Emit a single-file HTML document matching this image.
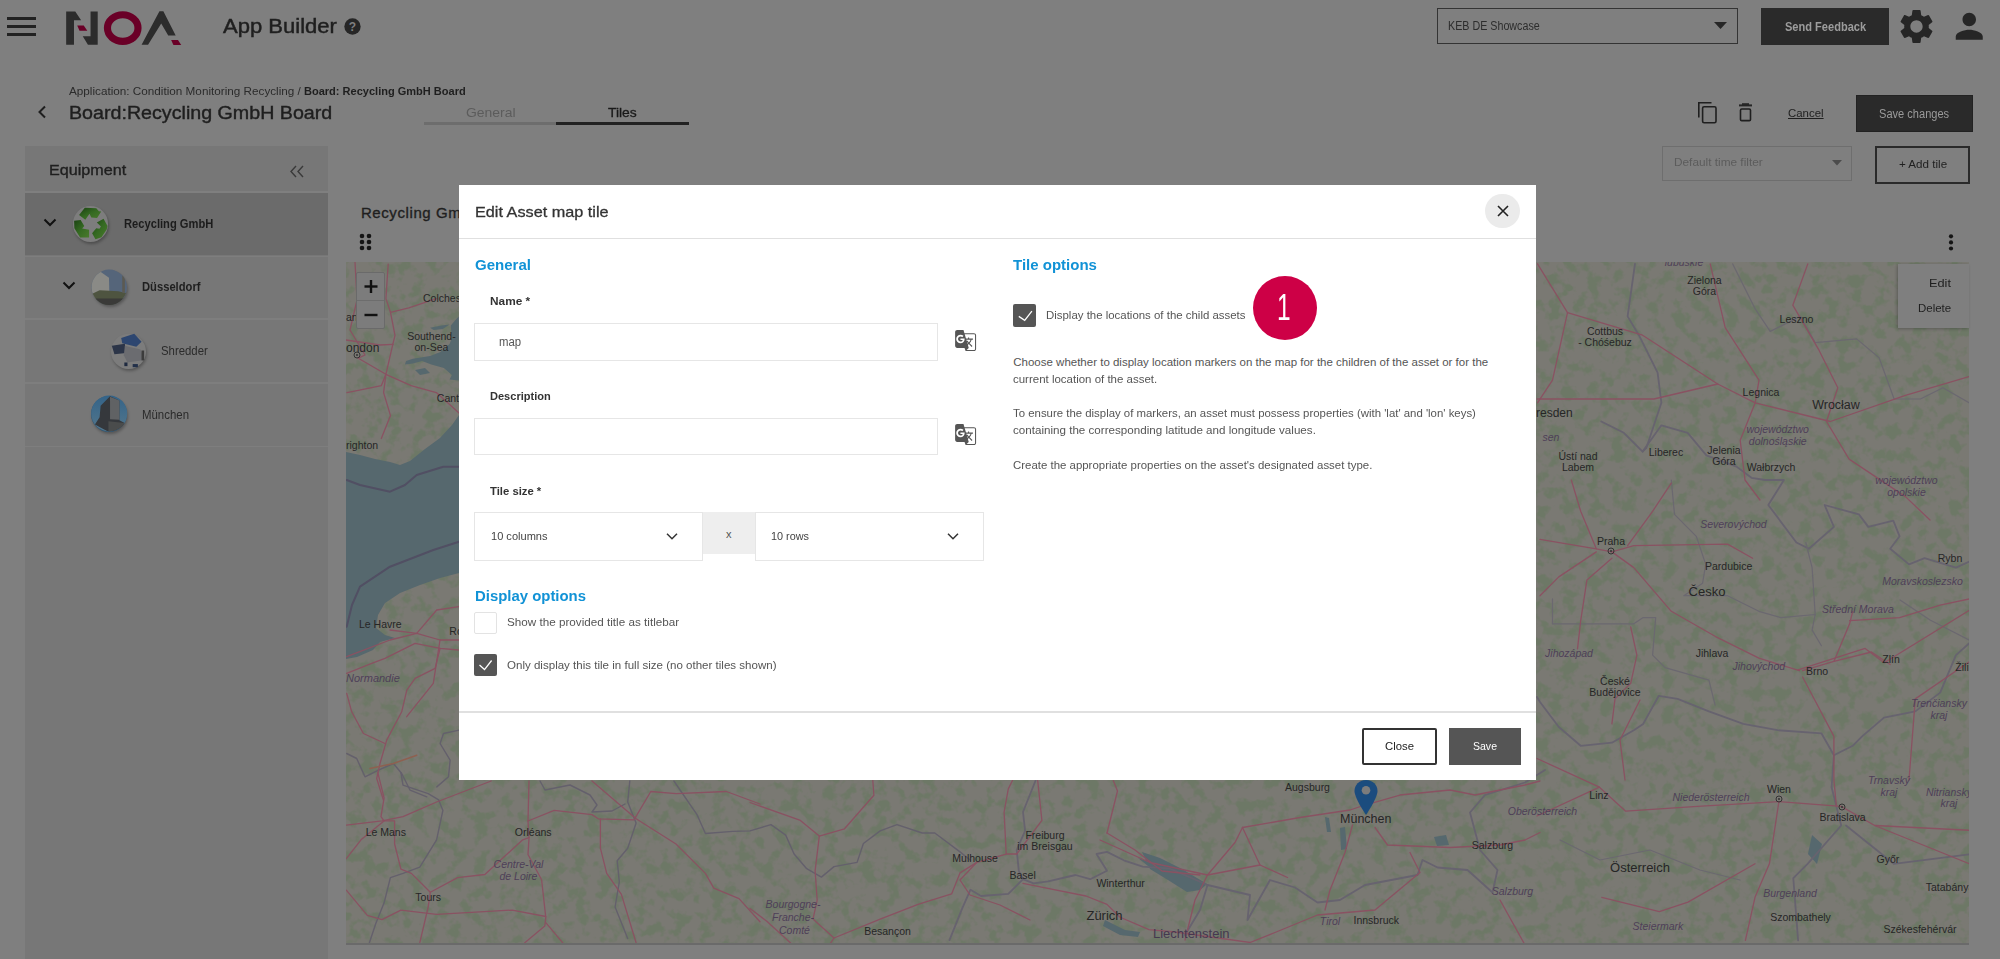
<!DOCTYPE html>
<html><head><meta charset="utf-8">
<style>
html,body{margin:0;padding:0;width:2000px;height:959px;overflow:hidden;background:#7f7f7f;}
body{position:relative;font-family:"Liberation Sans", sans-serif;}
.t{position:absolute;white-space:nowrap;line-height:1;}
.b{position:absolute;box-sizing:border-box;}
svg{position:absolute;overflow:visible;}
</style></head><body>
<!-- header -->
<div class="b" style="left:7px;top:17px;width:29px;height:3px;background:#222;"></div>
<div class="b" style="left:7px;top:24.5px;width:29px;height:3.0px;background:#222;"></div>
<div class="b" style="left:7px;top:32.5px;width:29px;height:3.0px;background:#222;"></div>
<svg style="left:60px;top:5px" width="130" height="45" viewBox="0 0 2000 692">
<polygon fill="#2c2c2c" points="95,100 235,100 325,235 215,235 215,612 95,612"/>
<polygon fill="#6a0027" points="265,315 365,315 420,395 300,395"/>
<polygon fill="#2c2c2c" points="470,100 580,100 580,612 430,612 350,480 470,480"/>
<ellipse cx="965" cy="355" rx="235" ry="205" fill="none" stroke="#6a0027" stroke-width="110"/>
<polygon fill="#2c2c2c" points="1530,95 1590,95 1780,470 1665,470 1557,285 1355,612 1255,612"/>
<polygon fill="#6a0027" points="1710,540 1815,540 1865,615 1745,615"/>
</svg>
<svg style="left:344px;top:18px" width="17" height="17" viewBox="0 0 24 24"><circle cx="12" cy="12" r="11.5" fill="#262626"/><text x="12" y="18" font-size="17" font-weight="700" text-anchor="middle" fill="#7f7f7f" font-family="Liberation Sans">?</text></svg>
<div class="b" style="left:1436.5px;top:7.5px;width:301.5px;height:36.5px;border:1.5px solid #333;"></div>
<svg style="left:1714px;top:22px" width="13" height="7" viewBox="0 0 13 7"><polygon points="0,0 13,0 6.5,7" fill="#262626"/></svg>
<div class="b" style="left:1761.4px;top:7.5px;width:128.0999999999999px;height:37.2px;background:#2a2a2a;"></div>
<svg style="left:1895.5px;top:5.5px" width="41" height="41" viewBox="0 0 24 24"><path fill="#262626" d="M19.14 12.94c.04-.3.06-.61.06-.94 0-.32-.02-.64-.07-.94l2.03-1.58a.49.49 0 0 0 .12-.61l-1.92-3.32a.488.488 0 0 0-.59-.22l-2.39.96c-.5-.38-1.03-.7-1.62-.94l-.36-2.54a.484.484 0 0 0-.48-.41h-3.84c-.24 0-.43.17-.47.41l-.36 2.54c-.59.24-1.13.57-1.62.94l-2.39-.96c-.22-.08-.47 0-.59.22L2.74 8.87c-.12.21-.08.47.12.61l2.03 1.58c-.05.3-.09.63-.09.94s.02.64.07.94l-2.03 1.58a.49.49 0 0 0-.12.61l1.92 3.32c.12.22.37.29.59.22l2.39-.96c.5.38 1.03.7 1.62.94l.36 2.54c.05.24.24.41.48.41h3.84c.24 0 .44-.17.47-.41l.36-2.54c.59-.24 1.13-.56 1.62-.94l2.39.96c.22.08.47 0 .59-.22l1.92-3.32c.12-.22.07-.47-.12-.61l-2.01-1.58zM12 15.6c-1.98 0-3.6-1.62-3.6-3.6s1.62-3.6 3.6-3.6 3.6 1.62 3.6 3.6-1.62 3.6-3.6 3.6z"/></svg>
<svg style="left:1948.75px;top:5.75px" width="40.5" height="40.5" viewBox="0 0 24 24"><path fill="#262626" d="M12 12c2.21 0 4-1.79 4-4s-1.79-4-4-4-4 1.79-4 4 1.79 4 4 4zm0 2c-2.67 0-8 1.34-8 4v2h16v-2c0-2.66-5.33-4-8-4z"/></svg>
<!-- sub header -->
<svg style="left:36px;top:105px" width="12" height="14" viewBox="0 0 12 14"><polyline points="9,1.5 3.5,7 9,12.5" fill="none" stroke="#1f1f1f" stroke-width="2"/></svg>
<div class="b" style="left:424px;top:122px;width:132px;height:3px;background:#6d6d6d;"></div>
<div class="b" style="left:556px;top:122px;width:132.5px;height:3px;background:#222;"></div>
<svg style="left:1696px;top:100px" width="24" height="26" viewBox="0 0 24 26"><path d="M2.8,17.5 V2.8 H15.5" fill="none" stroke="#1f1f1f" stroke-width="1.6"/><rect x="6.6" y="6.8" width="13.4" height="16" rx="1.5" fill="none" stroke="#1f1f1f" stroke-width="1.6"/></svg>
<svg style="left:1736px;top:102px" width="20" height="22" viewBox="0 0 20 22"><rect x="3" y="2.4" width="13" height="2" fill="#262626"/><rect x="6" y="1.2" width="7" height="2" fill="#262626"/><rect x="4.5" y="7" width="10" height="11.6" rx="1.2" fill="none" stroke="#1f1f1f" stroke-width="1.6"/></svg>
<div class="b" style="left:1856px;top:95px;width:116.5px;height:37px;background:#2a2a2a;border:1px solid #222;"></div>
<!-- equipment panel -->
<div class="b" style="left:25px;top:146px;width:303px;height:813px;background:#777;"></div>
<div class="b" style="left:25px;top:191px;width:303px;height:1.5px;background:#7f7f7f;"></div>
<div class="b" style="left:25px;top:192.5px;width:303px;height:62.5px;background:#6b6b6b;"></div>
<div class="b" style="left:25px;top:255.5px;width:303px;height:1.5px;background:#7e7e7e;"></div>
<div class="b" style="left:25px;top:318px;width:303px;height:1.5px;background:#7e7e7e;"></div>
<div class="b" style="left:25px;top:382px;width:303px;height:1.5px;background:#7e7e7e;"></div>
<div class="b" style="left:25px;top:445.5px;width:303px;height:1.5px;background:#7e7e7e;"></div>
<svg style="left:288px;top:164px" width="18" height="15" viewBox="0 0 18 15"><polyline points="8,2 3,7.5 8,13" fill="none" stroke="#3a3a3a" stroke-width="1.4"/><polyline points="15,2 10,7.5 15,13" fill="none" stroke="#3a3a3a" stroke-width="1.4"/></svg>
<svg style="left:43px;top:217px" width="14" height="11" viewBox="0 0 14 11"><polyline points="1.5,2.5 7,8 12.5,2.5" fill="none" stroke="#111" stroke-width="2"/></svg>
<svg style="left:62px;top:280px" width="14" height="11" viewBox="0 0 14 11"><polyline points="1.5,2.5 7,8 12.5,2.5" fill="none" stroke="#111" stroke-width="2"/></svg>
<!-- asset icons -->
<div class="b" style="left:72.8px;top:206.3px;width:35.4px;height:35.4px;border-radius:50%;background:#7d7d7d;box-shadow:1px 2px 3px rgba(0,0,0,.28);"></div>
<svg style="left:65px;top:200px" width="70" height="50" viewBox="0 0 1343 959">
<defs><linearGradient id="rg" x1="0" y1="0" x2="1" y2="1"><stop offset="0" stop-color="#1a4212"/><stop offset="0.5" stop-color="#356a22"/><stop offset="1" stop-color="#4a7a2c"/></linearGradient></defs>
<g fill="url(#rg)">
<polygon points="270,290 380,150 600,160 650,215 695,220 615,345 505,335 470,265 390,380"/>
<polygon points="610,430 740,360 815,500 800,565 700,715 585,755 520,640 600,540 660,550 690,510"/>
<polygon points="175,400 300,385 370,500 330,548 462,570 462,720 290,720 180,540"/>
</g></svg>
<div class="b" style="left:91.5px;top:269.6px;width:35.4px;height:35.4px;border-radius:50%;background:#6a6a6a;box-shadow:1px 2px 3px rgba(0,0,0,.28);"></div>
<svg style="left:85px;top:262px" width="70" height="50" viewBox="0 0 1343 959">
<defs><clipPath id="cd"><circle cx="465" cy="485" r="340"/></clipPath></defs>
<g clip-path="url(#cd)">
<rect x="0" y="0" width="1343" height="959" fill="#55657a"/>
<polygon points="120,250 290,180 460,300 470,720 120,720" fill="#8a8a86"/>
<polygon points="280,540 640,560 800,600 800,900 120,900 120,620" fill="#4e5440"/>
<rect x="120" y="700" width="700" height="200" fill="#3a3a38"/>
<rect x="715" y="260" width="50" height="330" fill="#5c5a52"/>
</g></svg>
<div class="b" style="left:110.5px;top:333.6px;width:35.4px;height:35.4px;border-radius:50%;background:#7c7c7c;box-shadow:1px 2px 3px rgba(0,0,0,.28);"></div>
<svg style="left:104px;top:326px" width="50" height="50" viewBox="0 0 959 959">
<polygon points="330,230 580,150 720,300 620,400 350,330" fill="#2d4670"/>
<polygon points="150,380 400,340 420,520 200,540" fill="#2c3548"/>
<polygon points="400,380 700,450 770,650 450,700 380,560" fill="#6b6c70"/>
<rect x="720" y="470" width="50" height="190" fill="#3c3c3c"/>
<rect x="390" y="700" width="60" height="70" fill="#1f2a40"/>
<rect x="550" y="730" width="100" height="60" fill="#22304a"/>
</svg>
<div class="b" style="left:91.2px;top:395.5px;width:36px;height:36px;border-radius:50%;background:#2f5877;box-shadow:1px 2px 3px rgba(0,0,0,.28);"></div>
<svg style="left:85px;top:389px" width="50" height="50" viewBox="0 0 959 959">
<defs><clipPath id="cm"><circle cx="465" cy="470" r="345"/></clipPath><linearGradient id="sky" x1="0" y1="0" x2="0" y2="1"><stop offset="0" stop-color="#2e6088"/><stop offset="1" stop-color="#5a7a8c"/></linearGradient></defs>
<g clip-path="url(#cm)">
<rect x="0" y="0" width="959" height="959" fill="url(#sky)"/>
<polygon points="300,320 480,140 660,220 660,600 760,650 700,800 450,820 190,680 280,540" fill="#35383c"/>
<polygon points="480,150 660,220 660,590 480,580" fill="#606264"/>
<polygon points="450,620 760,650 700,800 450,820" fill="#4a4c4c"/>
</g></svg>
<!-- tile toolbar -->
<div class="b" style="left:1662.4px;top:146.4px;width:189.39999999999986px;height:34.19999999999999px;border:1px solid #6e6e6e;"></div>
<svg style="left:1831px;top:160px" width="12" height="6" viewBox="0 0 12 6"><polygon points="1,0 11,0 6,5.5" fill="#4c4c4c"/></svg>
<div class="b" style="left:1875.3px;top:146.4px;width:95.20000000000005px;height:37.400000000000006px;border:2px solid #2a2a2a;"></div>
<svg style="left:358px;top:232px" width="16" height="20" viewBox="0 0 16 20"><g fill="#151515"><circle cx="4" cy="4" r="2.3"/><circle cx="11" cy="4" r="2.3"/><circle cx="4" cy="10" r="2.3"/><circle cx="11" cy="10" r="2.3"/><circle cx="4" cy="16" r="2.3"/><circle cx="11" cy="16" r="2.3"/></g></svg>
<svg style="left:1946px;top:232px" width="10" height="20" viewBox="0 0 10 20"><g fill="#151515"><circle cx="5" cy="4.3" r="2.1"/><circle cx="5" cy="10.4" r="2.1"/><circle cx="5" cy="16.5" r="2.1"/></g></svg>
<div class="t" id="appb" style="left:223.00px;top:16.37px;font-size:20px;color:#1f1f1f;transform:scaleX(1.1020);transform-origin:0 0;-webkit-text-stroke:0.45px #1f1f1f;">App Builder</div>
<div class="t" id="keb" style="left:1447.60px;top:20.44px;font-size:12px;color:#2d2d2d;transform:scaleX(0.8930);transform-origin:0 0;">KEB DE Showcase</div>
<div class="t" id="sendfb" style="left:1784.90px;top:20.84px;font-size:12px;color:#9c9c9c;font-weight:700;transform:scaleX(0.9210);transform-origin:0 0;">Send Feedback</div>
<div class="t" id="bc1" style="left:68.70px;top:86.21px;font-size:10.5px;color:#2b2b2b;transform:scaleX(1.1160);transform-origin:0 0;">Application: Condition Monitoring Recycling /</div>
<div class="t" id="bc2" style="left:303.50px;top:86.21px;font-size:10.5px;color:#1f1f1f;font-weight:700;transform:scaleX(1.0500);transform-origin:0 0;">Board: Recycling GmbH Board</div>
<div class="t" id="title" style="left:69.10px;top:104.26px;font-size:18px;color:#1f1f1f;transform:scaleX(1.0920);transform-origin:0 0;-webkit-text-stroke:0.4px #1f1f1f;">Board:Recycling GmbH Board</div>
<div class="t" id="tabgen" style="left:465.50px;top:105.70px;font-size:13px;color:#5c5c5c;transform:scaleX(1.0700);transform-origin:0 0;">General</div>
<div class="t" id="tabtiles" style="left:608.30px;top:105.70px;font-size:13px;color:#1a1a1a;transform:scaleX(1.0640);transform-origin:0 0;-webkit-text-stroke:0.3px #1a1a1a;">Tiles</div>
<div class="t" id="cancel" style="left:1788.30px;top:107.77px;font-size:11.5px;color:#1f1f1f;transform:scaleX(0.9940);transform-origin:0 0;text-decoration:underline;">Cancel</div>
<div class="t" id="savech" style="left:1879.25px;top:107.84px;font-size:12px;color:#9a9a9a;transform:scaleX(0.9220);transform-origin:0 0;">Save changes</div>
<div class="t" id="equip" style="left:48.80px;top:162.30px;font-size:15px;color:#1f1f1f;transform:scaleX(1.0760);transform-origin:0 0;-webkit-text-stroke:0.35px #1f1f1f;">Equipment</div>
<div class="t" id="rec" style="left:123.50px;top:218.02px;font-size:12.5px;color:#1c1c1c;font-weight:700;transform:scaleX(0.8930);transform-origin:0 0;">Recycling GmbH</div>
<div class="t" id="dus" style="left:142.30px;top:280.72px;font-size:12.5px;color:#1f1f1f;font-weight:700;transform:scaleX(0.8960);transform-origin:0 0;">Düsseldorf</div>
<div class="t" id="shr" style="left:161.30px;top:344.92px;font-size:12.5px;color:#2b2b2b;transform:scaleX(0.9100);transform-origin:0 0;">Shredder</div>
<div class="t" id="mun" style="left:142.30px;top:408.72px;font-size:12.5px;color:#2b2b2b;transform:scaleX(0.9140);transform-origin:0 0;">München</div>
<div class="t" id="tiletitle" style="left:360.90px;top:204.90px;font-size:15px;color:#1f1f1f;-webkit-text-stroke:0.35px #1f1f1f;letter-spacing:0.6px;">Recycling GmbH Board</div>
<div class="t" id="dtf" style="left:1673.50px;top:157.27px;font-size:11.5px;color:#5c5c5c;transform:scaleX(1.0280);transform-origin:0 0;">Default time filter</div>
<div class="t" id="addtile" style="left:1898.60px;top:159.27px;font-size:11.5px;color:#1f1f1f;transform:scaleX(1.0100);transform-origin:0 0;">+ Add tile</div>
<!-- map -->
<div class="b" style="left:346px;top:262px;width:1623px;height:681px;overflow:hidden;background:#777570;">
<svg style="left:0;top:0" width="1623" height="681" viewBox="346 262 1623 681" font-family="Liberation Sans, sans-serif"><defs><filter id="fo" x="0" y="0" width="100%" height="100%" color-interpolation-filters="sRGB"><feTurbulence type="fractalNoise" baseFrequency="0.08" numOctaves="3" seed="7"/><feColorMatrix type="matrix" values="0 0 0 0 0.40  0 0 0 0 0.47  0 0 0 0 0.37  6 0 0 0 -2.9"/></filter></defs>
<rect x="346" y="262" width="1623" height="681" fill="#7a7973"/>
<rect x="346" y="262" width="1623" height="681" filter="url(#fo)" opacity="0.6"/>
<polygon points="346.0,452.0 360.0,455.0 375.0,459.0 390.0,462.0 400.0,465.0 410.0,461.0 425.0,449.0 440.0,438.0 452.0,425.0 459.0,415.0 459.0,573.0 440.0,578.0 420.0,585.0 400.0,593.0 385.0,603.0 378.0,615.0 376.0,628.0 385.0,635.0 395.0,638.0 380.0,642.0 373.0,650.0 357.0,657.0 346.0,659.0" fill="#56686e" />
<polygon points="458.8,316.4 456.5,318.7 450.8,325.6 451.9,338.2 449.6,343.9 440.5,351.9 430.1,355.9 412.9,358.8 406.1,361.1 404.9,364.5 412.9,363.4 422.1,361.1 431.3,364.5 443.9,367.9 451.9,374.9 449.6,379.4 458.8,380.6" fill="#56686e" />
<polygon points="430.1,327.8 441.6,325.6 449.6,324.4 442.8,329.0 433.6,330.1" fill="#56686e" />
<polygon points="415.0,370.0 425.0,368.0 430.0,373.0 420.0,375.0" fill="#56686e" />
<polygon points="1142.0,852.0 1160.0,858.0 1182.0,869.0 1207.0,884.0 1200.0,890.0 1187.0,892.0 1168.0,880.0 1150.0,869.0" fill="#56686e" />
<polygon points="1138.0,858.0 1150.0,862.0 1170.0,867.0 1170.0,872.0 1148.0,866.0" fill="#56686e" />
<polygon points="1325.0,817.0 1329.0,818.0 1331.0,832.0 1327.0,832.0" fill="#56686e" />
<polygon points="1340.0,828.0 1345.0,827.0 1347.0,849.0 1341.0,850.0" fill="#56686e" />
<polygon points="1434.0,837.0 1446.0,835.0 1449.0,845.0 1437.0,846.0" fill="#56686e" />
<polygon points="1812.0,835.0 1822.0,844.0 1817.0,864.0 1808.0,854.0" fill="#56686e" />
<polygon points="1105.0,920.0 1125.0,930.0 1140.0,932.0 1138.0,937.0 1120.0,935.0 1103.0,926.0" fill="#56686e" />
<polyline points="346.7,480.0 360.0,485.0 390.0,491.7 405.0,485.0 416.7,475.0 443.3,466.7 459.0,466.7" fill="none" stroke="#514f63" stroke-width="2" stroke-linejoin="round" stroke-linecap="round" />
<polyline points="346.7,626.7 352.0,605.0 360.0,586.7 390.0,566.7 433.3,550.0 459.0,541.7" fill="none" stroke="#514f63" stroke-width="2" stroke-linejoin="round" stroke-linecap="round" />
<polyline points="400.9,772.6 403.0,785.2 428.2,793.6 438.7,799.9 442.9,810.4 436.6,839.8 419.8,867.1 403.0,873.4 390.4,877.6 384.1,902.8 375.7,923.8 369.4,942.7" fill="none" stroke="#64606c" stroke-width="1.4" stroke-linejoin="round" stroke-linecap="round" />
<polyline points="629.8,781.0 627.7,802.0 636.1,823.0 627.7,848.2 617.2,860.8 619.3,881.8 615.1,907.0 627.7,938.5" fill="none" stroke="#64606c" stroke-width="1.4" stroke-linejoin="round" stroke-linecap="round" />
<polyline points="673.9,781.0 697.0,814.6 705.4,833.5 732.7,831.4 750.0,830.9 771.0,824.6 785.7,835.1 794.1,854.0 806.7,868.7 821.4,877.1 834.0,866.6 857.1,862.4 863.4,843.5 880.2,830.9 897.0,824.6 922.2,833.0 934.8,833.0 960.0,851.9 970.5,860.3" fill="none" stroke="#64606c" stroke-width="1.4" stroke-linejoin="round" stroke-linecap="round" />
<polyline points="346.7,753.5 356.7,758.5 365.0,776.8 378.4,770.2 393.4,763.5 401.7,773.5 410.1,790.2 426.8,796.9" fill="none" stroke="#64606c" stroke-width="1.4" stroke-linejoin="round" stroke-linecap="round" />
<polyline points="459.0,730.1 443.5,733.5 440.1,743.5 450.1,760.2 448.5,776.8 436.8,786.9" fill="none" stroke="#64606c" stroke-width="1.4" stroke-linejoin="round" stroke-linecap="round" />
<polyline points="540.0,781.0 545.0,790.0 570.0,785.0 590.0,795.0 597.0,805.0 592.0,812.0 612.0,811.0 625.0,804.0" fill="none" stroke="#64606c" stroke-width="1.4" stroke-linejoin="round" stroke-linecap="round" />
<polyline points="1035.6,780.5 1023.0,812.0 1025.1,830.9 1016.7,849.8 1018.8,870.8 1023.0,879.2" fill="none" stroke="#67636f" stroke-width="1.8" stroke-linejoin="round" stroke-linecap="round" />
<polyline points="1023.0,879.2 1033.5,883.4 1048.2,881.3 1075.5,875.0 1090.2,879.2 1107.0,870.8 1096.5,854.0 1107.0,851.9 1123.8,860.3 1142.7,866.6 1170.0,868.7 1207.5,885.0" fill="none" stroke="#67636f" stroke-width="1.8" stroke-linejoin="round" stroke-linecap="round" />
<polyline points="1023.0,879.2 1008.3,893.9 981.0,896.0 970.5,889.7 962.1,908.6 949.5,940.1" fill="none" stroke="#67636f" stroke-width="1.8" stroke-linejoin="round" stroke-linecap="round" />
<polyline points="1207.5,885.0 1250.0,895.0 1247.5,920.0 1270.0,880.0 1295.0,887.5 1317.5,902.5 1340.0,900.0 1365.0,885.0 1417.5,875.0 1422.5,860.0 1437.5,867.5 1467.5,870.0 1492.5,892.5 1497.5,870.0 1480.0,850.0 1470.0,812.5 1485.0,795.0 1525.0,782.5 1545.0,770.0" fill="none" stroke="#67636f" stroke-width="1.8" stroke-linejoin="round" stroke-linecap="round" />
<polyline points="1207.5,885.0 1200.0,910.0 1185.0,935.0" fill="none" stroke="#67636f" stroke-width="1.8" stroke-linejoin="round" stroke-linecap="round" />
<polyline points="1635.0,263.9 1627.6,316.4 1638.9,335.2 1657.6,372.7 1661.4,402.8 1646.4,447.8 1642.6,451.6" fill="none" stroke="#67636f" stroke-width="1.8" stroke-linejoin="round" stroke-linecap="round" />
<polyline points="1601.3,421.5 1623.8,432.8 1642.6,451.6 1661.4,425.3 1687.7,432.8 1706.4,455.3 1736.5,466.6 1751.5,477.8 1765.1,480.0 1783.9,480.0 1768.3,505.0 1796.4,542.5 1808.9,548.8 1833.9,526.9 1824.6,505.0 1858.9,514.4 1868.3,526.9 1893.3,520.7 1899.6,536.3 1890.2,548.8 1909.0,564.4 1924.6,558.2 1955.9,567.6 1970.0,561.3" fill="none" stroke="#67636f" stroke-width="1.8" stroke-linejoin="round" stroke-linecap="round" />
<polyline points="1537.0,697.0 1540.0,702.0 1558.8,727.0 1580.7,745.8 1611.9,742.7 1633.8,730.2 1643.2,723.9 1658.8,695.8 1677.6,698.9 1708.9,711.4 1743.3,723.9 1777.6,730.2 1821.4,733.3 1833.9,755.2 1852.7,745.8 1862.1,736.4 1884.0,717.6 1915.3,711.4 1940.2,692.6 1955.9,655.1 1970.0,642.6" fill="none" stroke="#67636f" stroke-width="1.8" stroke-linejoin="round" stroke-linecap="round" />
<polyline points="1833.9,755.2 1831.6,787.2" fill="none" stroke="#67636f" stroke-width="1.8" stroke-linejoin="round" stroke-linecap="round" />
<polyline points="1831.6,787.2 1841.2,825.5 1807.6,863.8 1793.3,878.2 1798.1,940.4" fill="none" stroke="#67636f" stroke-width="1.8" stroke-linejoin="round" stroke-linecap="round" />
<polyline points="1846.0,825.5 1893.8,863.8 1969.5,854.3" fill="none" stroke="#67636f" stroke-width="1.8" stroke-linejoin="round" stroke-linecap="round" />
<polyline points="1732.7,263.9 1755.2,308.9 1770.2,331.4 1800.3,316.4 1815.3,342.7 1856.6,338.9 1879.1,357.7 1894.1,399.0 1920.4,399.0 1942.9,387.7 1969.0,402.8" fill="none" stroke="#6b6870" stroke-width="1.2" stroke-linejoin="round" stroke-linecap="round" />
<polyline points="1671.3,480.0 1674.5,514.4 1696.3,536.3 1705.7,564.4 1702.6,583.2 1683.8,595.7 1727.6,595.7 1758.9,611.3 1780.8,617.6 1815.2,614.5 1812.1,630.1 1821.4,645.7" fill="none" stroke="#6b6870" stroke-width="1.2" stroke-linejoin="round" stroke-linecap="round" />
<polyline points="1815.2,614.5 1812.1,567.6 1805.8,542.5" fill="none" stroke="#6b6870" stroke-width="1.2" stroke-linejoin="round" stroke-linecap="round" />
<polyline points="1552.5,598.8 1552.5,623.8 1580.7,623.8 1633.8,623.8 1643.2,617.6 1655.7,617.6 1652.6,655.1 1665.1,667.6 1708.9,680.1 1715.1,705.1" fill="none" stroke="#6b6870" stroke-width="1.2" stroke-linejoin="round" stroke-linecap="round" />
<polyline points="1560.0,840.0 1600.0,860.0 1650.0,850.0 1700.0,870.0 1740.0,880.0" fill="none" stroke="#6b6870" stroke-width="1.2" stroke-linejoin="round" stroke-linecap="round" />
<polyline points="1900.0,600.0 1930.0,620.0 1969.0,640.0" fill="none" stroke="#6b6870" stroke-width="1.2" stroke-linejoin="round" stroke-linecap="round" />
<polyline points="346.3,825.1 382.0,820.9 403.0,816.7 436.6,802.0 491.2,781.0" fill="none" stroke="#8a5262" stroke-width="1.3" stroke-linejoin="round" stroke-linecap="round" />
<polyline points="377.8,772.6 384.1,797.8 381.0,816.7 384.0,820.9 394.6,820.9 394.6,844.0 400.9,869.2 411.4,873.4 430.3,892.3 428.2,907.0 419.8,942.7" fill="none" stroke="#8a5262" stroke-width="1.3" stroke-linejoin="round" stroke-linecap="round" />
<polyline points="384.0,820.9 361.0,839.8 346.3,858.7" fill="none" stroke="#8a5262" stroke-width="1.3" stroke-linejoin="round" stroke-linecap="round" />
<polyline points="430.3,892.3 457.6,877.6 484.9,874.5 522.7,839.8 529.0,837.7" fill="none" stroke="#8a5262" stroke-width="1.3" stroke-linejoin="round" stroke-linecap="round" />
<polyline points="529.0,781.0 528.0,821.0 529.0,837.7 528.0,854.5 541.6,879.7 545.8,917.5 544.8,925.9 524.8,942.7" fill="none" stroke="#8a5262" stroke-width="1.3" stroke-linejoin="round" stroke-linecap="round" />
<polyline points="528.0,821.0 554.2,810.4 592.0,814.6 598.3,818.8 634.0,819.9 650.8,791.5 676.0,793.6 726.4,791.5 760.0,804.0" fill="none" stroke="#8a5262" stroke-width="1.3" stroke-linejoin="round" stroke-linecap="round" />
<polyline points="592.0,781.0 636.1,818.8 676.0,844.0 705.4,873.4 713.8,888.1 739.0,898.6 760.0,921.7" fill="none" stroke="#8a5262" stroke-width="1.3" stroke-linejoin="round" stroke-linecap="round" />
<polyline points="600.4,818.8 600.4,848.2 606.7,873.4 621.4,894.4 636.1,942.7" fill="none" stroke="#8a5262" stroke-width="1.3" stroke-linejoin="round" stroke-linecap="round" />
<polyline points="346.3,890.2 367.3,915.4 382.0,919.6 400.9,910.1 436.6,914.3 512.2,910.1 545.8,916.5" fill="none" stroke="#8a5262" stroke-width="1.3" stroke-linejoin="round" stroke-linecap="round" />
<polyline points="545.8,922.7 562.6,942.7" fill="none" stroke="#8a5262" stroke-width="1.3" stroke-linejoin="round" stroke-linecap="round" />
<polyline points="750.0,802.5 800.4,820.4 819.3,836.1 844.5,828.8 873.9,795.2 872.8,780.5" fill="none" stroke="#8a5262" stroke-width="1.3" stroke-linejoin="round" stroke-linecap="round" />
<polyline points="819.3,836.1 815.1,870.8 817.2,900.2 813.0,919.1 834.0,938.0 829.8,944.3" fill="none" stroke="#8a5262" stroke-width="1.3" stroke-linejoin="round" stroke-linecap="round" />
<polyline points="750.0,908.6 766.8,921.2 792.0,944.3" fill="none" stroke="#8a5262" stroke-width="1.3" stroke-linejoin="round" stroke-linecap="round" />
<polyline points="834.0,938.0 880.2,919.1 918.0,904.4 951.6,893.9 960.0,872.9 976.8,862.4 1006.2,854.0 1016.7,854.0" fill="none" stroke="#8a5262" stroke-width="1.3" stroke-linejoin="round" stroke-linecap="round" />
<polyline points="1006.2,854.0 1004.1,812.0 1008.3,788.9 1012.5,780.5" fill="none" stroke="#8a5262" stroke-width="1.3" stroke-linejoin="round" stroke-linecap="round" />
<polyline points="1016.7,854.0 1041.9,820.4 1037.7,780.5" fill="none" stroke="#8a5262" stroke-width="1.3" stroke-linejoin="round" stroke-linecap="round" />
<polyline points="976.8,862.4 960.0,880.0 970.0,895.0 1000.0,905.0 1030.0,920.0" fill="none" stroke="#8a5262" stroke-width="1.3" stroke-linejoin="round" stroke-linecap="round" />
<polyline points="1023.0,883.4 1044.0,887.6 1086.0,896.0 1107.0,904.4 1119.6,917.0 1149.0,929.6 1175.0,932.0 1250.0,942.5" fill="none" stroke="#8a5262" stroke-width="1.3" stroke-linejoin="round" stroke-linecap="round" />
<polyline points="1107.0,833.0 1117.5,791.0 1113.3,780.5" fill="none" stroke="#8a5262" stroke-width="1.3" stroke-linejoin="round" stroke-linecap="round" />
<polyline points="1107.0,833.0 1135.0,850.0 1162.0,871.0 1200.0,875.0" fill="none" stroke="#8a5262" stroke-width="1.3" stroke-linejoin="round" stroke-linecap="round" />
<polyline points="1100.0,840.0 1150.0,862.5 1207.5,875.0 1260.0,865.0 1242.5,827.5" fill="none" stroke="#8a5262" stroke-width="1.3" stroke-linejoin="round" stroke-linecap="round" />
<polyline points="1242.5,827.5 1300.0,817.5 1350.0,810.0 1365.0,805.0 1400.0,795.0 1450.0,790.0 1475.0,795.0 1525.0,785.0 1540.0,781.0" fill="none" stroke="#8a5262" stroke-width="1.3" stroke-linejoin="round" stroke-linecap="round" />
<polyline points="1375.0,827.5 1387.5,845.0 1450.0,847.5 1500.0,845.0 1525.0,840.0 1540.0,832.5" fill="none" stroke="#8a5262" stroke-width="1.3" stroke-linejoin="round" stroke-linecap="round" />
<polyline points="1352.5,825.0 1345.0,852.5 1330.0,890.0 1325.0,910.0" fill="none" stroke="#8a5262" stroke-width="1.3" stroke-linejoin="round" stroke-linecap="round" />
<polyline points="1410.0,852.5 1420.0,872.5 1375.0,910.0 1317.5,915.0 1275.0,932.5 1250.0,942.5" fill="none" stroke="#8a5262" stroke-width="1.3" stroke-linejoin="round" stroke-linecap="round" />
<polyline points="1242.5,827.5 1235.0,842.5 1207.5,875.0 1195.0,900.0 1185.0,940.0" fill="none" stroke="#8a5262" stroke-width="1.3" stroke-linejoin="round" stroke-linecap="round" />
<polyline points="1500.0,900.0 1525.0,945.0" fill="none" stroke="#8a5262" stroke-width="1.3" stroke-linejoin="round" stroke-linecap="round" />
<polyline points="1260.0,865.0 1287.5,877.5" fill="none" stroke="#8a5262" stroke-width="1.3" stroke-linejoin="round" stroke-linecap="round" />
<polyline points="1365.0,805.0 1360.0,782.0" fill="none" stroke="#8a5262" stroke-width="1.3" stroke-linejoin="round" stroke-linecap="round" />
<polyline points="1537.5,263.9 1567.5,312.7 1552.5,380.2 1537.5,402.8" fill="none" stroke="#8a5262" stroke-width="1.3" stroke-linejoin="round" stroke-linecap="round" />
<polyline points="1567.5,312.7 1642.6,335.2 1717.7,384.0 1755.2,402.8 1830.3,421.5 1905.4,395.3 1969.0,376.5" fill="none" stroke="#8a5262" stroke-width="1.3" stroke-linejoin="round" stroke-linecap="round" />
<polyline points="1710.2,263.9 1725.2,327.7 1759.0,380.2 1755.2,402.8 1740.2,440.3 1745.0,480.0 1760.0,500.0" fill="none" stroke="#8a5262" stroke-width="1.3" stroke-linejoin="round" stroke-linecap="round" />
<polyline points="1807.8,263.9 1792.8,305.2 1819.0,350.2 1837.8,387.7 1826.5,421.5 1849.1,459.1 1905.4,496.6 1930.0,520.0" fill="none" stroke="#8a5262" stroke-width="1.3" stroke-linejoin="round" stroke-linecap="round" />
<polyline points="1537.0,399.0 1653.9,399.0 1717.7,384.0" fill="none" stroke="#8a5262" stroke-width="1.3" stroke-linejoin="round" stroke-linecap="round" />
<polyline points="1540.0,539.4 1596.3,548.8 1611.9,551.9 1633.8,567.6 1671.3,611.3 1715.1,636.3 1758.9,658.2 1799.5,670.7" fill="none" stroke="#8a5262" stroke-width="1.3" stroke-linejoin="round" stroke-linecap="round" />
<polyline points="1611.9,551.9 1633.8,545.7 1727.6,544.1 1752.6,558.2" fill="none" stroke="#8a5262" stroke-width="1.3" stroke-linejoin="round" stroke-linecap="round" />
<polyline points="1627.6,545.7 1652.6,511.3 1671.3,483.1" fill="none" stroke="#8a5262" stroke-width="1.3" stroke-linejoin="round" stroke-linecap="round" />
<polyline points="1611.9,558.2 1586.9,580.1 1580.7,620.7 1577.5,648.9" fill="none" stroke="#8a5262" stroke-width="1.3" stroke-linejoin="round" stroke-linecap="round" />
<polyline points="1596.3,548.8 1580.7,511.3 1571.3,480.0" fill="none" stroke="#8a5262" stroke-width="1.3" stroke-linejoin="round" stroke-linecap="round" />
<polyline points="1596.3,551.9 1558.8,576.9 1540.0,595.7" fill="none" stroke="#8a5262" stroke-width="1.3" stroke-linejoin="round" stroke-linecap="round" />
<polyline points="1630.7,627.0 1636.9,655.1 1630.7,683.3 1615.0,698.9 1611.9,723.9" fill="none" stroke="#8a5262" stroke-width="1.3" stroke-linejoin="round" stroke-linecap="round" />
<polyline points="1802.6,677.0 1833.9,736.4 1833.9,779.9 1836.4,806.4" fill="none" stroke="#8a5262" stroke-width="1.3" stroke-linejoin="round" stroke-linecap="round" />
<polyline points="1802.6,670.7 1833.9,661.4 1849.6,623.8 1852.7,611.3" fill="none" stroke="#8a5262" stroke-width="1.3" stroke-linejoin="round" stroke-linecap="round" />
<polyline points="1833.9,661.4 1871.5,652.0 1890.2,664.5" fill="none" stroke="#8a5262" stroke-width="1.3" stroke-linejoin="round" stroke-linecap="round" />
<polyline points="1849.6,620.7 1899.6,617.6 1940.2,605.1 1970.0,598.8" fill="none" stroke="#8a5262" stroke-width="1.3" stroke-linejoin="round" stroke-linecap="round" />
<polyline points="1909.0,780.0 1915.3,698.9 1970.0,661.4" fill="none" stroke="#8a5262" stroke-width="1.3" stroke-linejoin="round" stroke-linecap="round" />
<polyline points="1537.0,816.0 1599.4,787.2 1625.7,811.2 1697.5,806.4 1778.9,801.6 1841.2,806.4 1874.7,825.5 1969.5,830.3" fill="none" stroke="#8a5262" stroke-width="1.3" stroke-linejoin="round" stroke-linecap="round" />
<polyline points="1537.0,758.5 1599.4,787.2" fill="none" stroke="#8a5262" stroke-width="1.3" stroke-linejoin="round" stroke-linecap="round" />
<polyline points="1778.9,801.6 1769.4,863.8 1755.0,897.3 1745.4,940.4" fill="none" stroke="#8a5262" stroke-width="1.3" stroke-linejoin="round" stroke-linecap="round" />
<polyline points="1601.8,897.3 1659.3,911.7 1688.0,902.1 1755.0,863.8" fill="none" stroke="#8a5262" stroke-width="1.3" stroke-linejoin="round" stroke-linecap="round" />
<polyline points="1874.7,825.5 1969.5,863.8" fill="none" stroke="#8a5262" stroke-width="1.3" stroke-linejoin="round" stroke-linecap="round" />
<polyline points="1798.1,669.9 1865.1,648.4 1884.2,662.8 1969.5,610.1" fill="none" stroke="#8a5262" stroke-width="1.3" stroke-linejoin="round" stroke-linecap="round" />
<polyline points="1640.0,700.0 1620.0,740.0 1625.0,780.0" fill="none" stroke="#8a5262" stroke-width="1.3" stroke-linejoin="round" stroke-linecap="round" />
<polyline points="358.3,358.2 385.9,374.3 411.1,385.7 436.3,392.6 459.3,413.3" fill="none" stroke="#8a5262" stroke-width="1.3" stroke-linejoin="round" stroke-linecap="round" />
<polyline points="385.9,374.3 381.3,385.7 358.3,390.3 346.9,392.6" fill="none" stroke="#8a5262" stroke-width="1.3" stroke-linejoin="round" stroke-linecap="round" />
<polyline points="392.8,344.4 385.9,374.3 383.6,392.6 390.5,415.6 381.3,438.5" fill="none" stroke="#8a5262" stroke-width="1.3" stroke-linejoin="round" stroke-linecap="round" />
<polyline points="388.2,264.2 385.9,298.6 390.5,312.3 395.0,335.3 392.8,344.4" fill="none" stroke="#8a5262" stroke-width="1.3" stroke-linejoin="round" stroke-linecap="round" />
<polyline points="436.3,298.6 408.8,307.8 390.5,312.3" fill="none" stroke="#8a5262" stroke-width="1.3" stroke-linejoin="round" stroke-linecap="round" />
<polyline points="355.0,262.0 357.0,300.0 350.0,330.0 365.0,355.0 358.3,358.2" fill="none" stroke="#8a5262" stroke-width="1.3" stroke-linejoin="round" stroke-linecap="round" />
<polyline points="346.0,340.0 380.0,345.0 392.8,344.4" fill="none" stroke="#8a5262" stroke-width="1.3" stroke-linejoin="round" stroke-linecap="round" />
<polyline points="346.7,656.7 390.0,640.0 416.7,633.3 440.0,640.0 459.0,640.0" fill="none" stroke="#8a5262" stroke-width="1.3" stroke-linejoin="round" stroke-linecap="round" />
<polyline points="390.0,630.0 416.7,633.3 436.7,610.0 459.0,606.7" fill="none" stroke="#8a5262" stroke-width="1.3" stroke-linejoin="round" stroke-linecap="round" />
<polyline points="440.0,640.0 433.3,683.3 406.7,716.7" fill="none" stroke="#8a5262" stroke-width="1.3" stroke-linejoin="round" stroke-linecap="round" />
<polyline points="346.7,673.4 371.7,663.4 385.0,658.4 415.1,643.3 440.1,648.3 458.5,650.0" fill="none" stroke="#8a5262" stroke-width="1.3" stroke-linejoin="round" stroke-linecap="round" />
<polyline points="440.1,648.3 435.1,668.4 415.1,678.4 406.8,690.1 401.7,711.8 386.7,740.1 380.0,763.5 376.7,778.5 383.4,800.0" fill="none" stroke="#8a5262" stroke-width="1.3" stroke-linejoin="round" stroke-linecap="round" />
<polyline points="346.7,693.4 351.7,711.8 363.4,733.5 385.0,743.5" fill="none" stroke="#8a5262" stroke-width="1.3" stroke-linejoin="round" stroke-linecap="round" />
<polyline points="370.0,768.5 393.4,763.5 416.8,755.2" fill="none" stroke="#8e6050" stroke-width="1.5" stroke-linejoin="round" stroke-linecap="round" />
<circle cx="1611" cy="551" r="3" fill="none" stroke="#333" stroke-width="1"/><circle cx="1611" cy="551" r="1" fill="#333"/>
<circle cx="1779" cy="799" r="3" fill="none" stroke="#333" stroke-width="1"/><circle cx="1779" cy="799" r="1" fill="#333"/>
<circle cx="1842" cy="807" r="3" fill="none" stroke="#333" stroke-width="1"/><circle cx="1842" cy="807" r="1" fill="#333"/>
<circle cx="357" cy="355" r="3" fill="none" stroke="#333" stroke-width="1"/><circle cx="357" cy="355" r="1" fill="#333"/>
<text x="385.8" y="836.2" font-size="10.5" fill="#262626" text-anchor="middle" font-weight="400" >Le Mans</text>
<text x="533.2" y="835.6" font-size="10.5" fill="#262626" text-anchor="middle" font-weight="400" >Orléans</text>
<text x="428.2" y="901.3" font-size="10.5" fill="#262626" text-anchor="middle" font-weight="400" >Tours</text>
<text x="887.5" y="935.1" font-size="10.5" fill="#262626" text-anchor="middle" font-weight="400" >Besançon</text>
<text x="975.1" y="862.4" font-size="10.5" fill="#262626" text-anchor="middle" font-weight="400" >Mulhouse</text>
<text x="1045" y="838.5" font-size="10.5" fill="#262626" text-anchor="middle" font-weight="400" >Freiburg</text>
<text x="1045" y="849.8" font-size="10.5" fill="#262626" text-anchor="middle" font-weight="400" >im Breisgau</text>
<text x="1022.6" y="879.4" font-size="10.5" fill="#262626" text-anchor="middle" font-weight="400" >Basel</text>
<text x="1120.6" y="887.2" font-size="10.5" fill="#262626" text-anchor="middle" font-weight="400" >Winterthur</text>
<text x="1307.5" y="790.5" font-size="10.5" fill="#262626" text-anchor="middle" font-weight="400" >Augsburg</text>
<text x="1492.5" y="848.8" font-size="10.5" fill="#262626" text-anchor="middle" font-weight="400" >Salzburg</text>
<text x="1376.25" y="923.8" font-size="10.5" fill="#262626" text-anchor="middle" font-weight="400" >Innsbruck</text>
<text x="1704.5" y="283.8" font-size="10.5" fill="#262626" text-anchor="middle" font-weight="400" >Zielona</text>
<text x="1704.5" y="294.8" font-size="10.5" fill="#262626" text-anchor="middle" font-weight="400" >Góra</text>
<text x="1796.5" y="322.5" font-size="10.5" fill="#262626" text-anchor="middle" font-weight="400" >Leszno</text>
<text x="1605" y="334.8" font-size="10.5" fill="#262626" text-anchor="middle" font-weight="400" >Cottbus</text>
<text x="1605" y="345.8" font-size="10.5" fill="#262626" text-anchor="middle" font-weight="400" >- Chóśebuz</text>
<text x="1761" y="395.8" font-size="10.5" fill="#262626" text-anchor="middle" font-weight="400" >Legnica</text>
<text x="1578" y="459.8" font-size="10.5" fill="#262626" text-anchor="middle" font-weight="400" >Ústí nad</text>
<text x="1578" y="470.8" font-size="10.5" fill="#262626" text-anchor="middle" font-weight="400" >Labem</text>
<text x="1666" y="455.8" font-size="10.5" fill="#262626" text-anchor="middle" font-weight="400" >Liberec</text>
<text x="1724" y="453.8" font-size="10.5" fill="#262626" text-anchor="middle" font-weight="400" >Jelenia</text>
<text x="1724" y="464.8" font-size="10.5" fill="#262626" text-anchor="middle" font-weight="400" >Góra</text>
<text x="1771" y="470.8" font-size="10.5" fill="#262626" text-anchor="middle" font-weight="400" >Wałbrzych</text>
<text x="1728.6" y="569.8" font-size="10.5" fill="#262626" text-anchor="middle" font-weight="400" >Pardubice</text>
<text x="1712" y="656.8" font-size="10.5" fill="#262626" text-anchor="middle" font-weight="400" >Jihlava</text>
<text x="1891" y="662.8" font-size="10.5" fill="#262626" text-anchor="middle" font-weight="400" >Zlín</text>
<text x="1615" y="684.8" font-size="10.5" fill="#262626" text-anchor="middle" font-weight="400" >České</text>
<text x="1615" y="695.8" font-size="10.5" fill="#262626" text-anchor="middle" font-weight="400" >Budějovice</text>
<text x="1599" y="799.4" font-size="10.5" fill="#262626" text-anchor="middle" font-weight="400" >Linz</text>
<text x="1888" y="862.8" font-size="10.5" fill="#262626" text-anchor="middle" font-weight="400" >Győr</text>
<text x="1950" y="890.8" font-size="10.5" fill="#262626" text-anchor="middle" font-weight="400" >Tatabánya</text>
<text x="1800.5" y="920.8" font-size="10.5" fill="#262626" text-anchor="middle" font-weight="400" >Szombathely</text>
<text x="1920" y="932.8" font-size="10.5" fill="#262626" text-anchor="middle" font-weight="400" >Székesfehérvár</text>
<text x="1611" y="544.5" font-size="10.5" fill="#262626" text-anchor="middle" font-weight="400" >Praha</text>
<text x="1779" y="792.8" font-size="10.5" fill="#262626" text-anchor="middle" font-weight="400" >Wien</text>
<text x="1842.6" y="820.8" font-size="10.5" fill="#262626" text-anchor="middle" font-weight="400" >Bratislava</text>
<text x="1817" y="674.8" font-size="10.5" fill="#262626" text-anchor="middle" font-weight="400" >Brno</text>
<text x="1950" y="561.8" font-size="10.5" fill="#262626" text-anchor="middle" font-weight="400" >Rybn</text>
<text x="1965" y="670.8" font-size="10.5" fill="#262626" text-anchor="middle" font-weight="400" >Žilin</text>
<text x="1104.5" y="920.2" font-size="13" fill="#262626" text-anchor="middle" font-weight="400" >Zürich</text>
<text x="1836" y="408.5" font-size="12.5" fill="#262626" text-anchor="middle" font-weight="400" >Wrocław</text>
<text x="1365.75" y="822.5" font-size="12.5" fill="#262626" text-anchor="middle" font-weight="400" >München</text>
<text x="1707" y="595.7" font-size="13" fill="#262626" text-anchor="middle" font-weight="400" >Česko</text>
<text x="1640" y="871.7" font-size="13" fill="#262626" text-anchor="middle" font-weight="400" >Österreich</text>
<text x="1191.25" y="938.4" font-size="13" fill="#45384f" text-anchor="middle" font-weight="400" >Liechtenstein</text>
<text x="518.5" y="868.2" font-size="10.5" fill="#4e4058" text-anchor="middle" font-weight="400" font-style="italic">Centre-Val</text>
<text x="518.5" y="879.9" font-size="10.5" fill="#4e4058" text-anchor="middle" font-weight="400" font-style="italic">de Loire</text>
<text x="793" y="908.2" font-size="10.5" fill="#4e4058" text-anchor="middle" font-weight="400" font-style="italic">Bourgogne-</text>
<text x="793" y="920.8" font-size="10.5" fill="#4e4058" text-anchor="middle" font-weight="400" font-style="italic">Franche-</text>
<text x="794.5" y="933.8" font-size="10.5" fill="#4e4058" text-anchor="middle" font-weight="400" font-style="italic">Comté</text>
<text x="1542.5" y="814.5" font-size="10.5" fill="#4e4058" text-anchor="middle" font-weight="400" font-style="italic">Oberösterreich</text>
<text x="1512.5" y="895.0" font-size="10.5" fill="#4e4058" text-anchor="middle" font-weight="400" font-style="italic">Salzburg</text>
<text x="1330" y="924.5" font-size="10.5" fill="#4e4058" text-anchor="middle" font-weight="400" font-style="italic">Tirol</text>
<text x="1777.7" y="432.8" font-size="10.5" fill="#4e4058" text-anchor="middle" font-weight="400" font-style="italic">województwo</text>
<text x="1777.7" y="444.8" font-size="10.5" fill="#4e4058" text-anchor="middle" font-weight="400" font-style="italic">dolnośląskie</text>
<text x="1906.5" y="483.8" font-size="10.5" fill="#4e4058" text-anchor="middle" font-weight="400" font-style="italic">województwo</text>
<text x="1906.5" y="495.8" font-size="10.5" fill="#4e4058" text-anchor="middle" font-weight="400" font-style="italic">opolskie</text>
<text x="1733.4" y="527.8" font-size="10.5" fill="#4e4058" text-anchor="middle" font-weight="400" font-style="italic">Severovýchod</text>
<text x="1922.5" y="585.3" font-size="10.5" fill="#4e4058" text-anchor="middle" font-weight="400" font-style="italic">Moravskoslezsko</text>
<text x="1858" y="612.8" font-size="10.5" fill="#4e4058" text-anchor="middle" font-weight="400" font-style="italic">Střední Morava</text>
<text x="1569" y="656.8" font-size="10.5" fill="#4e4058" text-anchor="middle" font-weight="400" font-style="italic">Jihozápad</text>
<text x="1758.8" y="669.8" font-size="10.5" fill="#4e4058" text-anchor="middle" font-weight="400" font-style="italic">Jihovýchod</text>
<text x="1939" y="706.8" font-size="10.5" fill="#4e4058" text-anchor="middle" font-weight="400" font-style="italic">Trenčiansky</text>
<text x="1939" y="718.8" font-size="10.5" fill="#4e4058" text-anchor="middle" font-weight="400" font-style="italic">kraj</text>
<text x="1889" y="783.8" font-size="10.5" fill="#4e4058" text-anchor="middle" font-weight="400" font-style="italic">Trnavský</text>
<text x="1889" y="795.8" font-size="10.5" fill="#4e4058" text-anchor="middle" font-weight="400" font-style="italic">kraj</text>
<text x="1949" y="795.8" font-size="10.5" fill="#4e4058" text-anchor="middle" font-weight="400" font-style="italic">Nitriansky</text>
<text x="1949" y="806.8" font-size="10.5" fill="#4e4058" text-anchor="middle" font-weight="400" font-style="italic">kraj</text>
<text x="1711" y="800.8" font-size="10.5" fill="#4e4058" text-anchor="middle" font-weight="400" font-style="italic">Niederösterreich</text>
<text x="1790" y="897.3" font-size="10.5" fill="#4e4058" text-anchor="middle" font-weight="400" font-style="italic">Burgenland</text>
<text x="1658" y="929.8" font-size="10.5" fill="#4e4058" text-anchor="middle" font-weight="400" font-style="italic">Steiermark</text>
<text x="1551" y="440.8" font-size="10.5" fill="#4e4058" text-anchor="middle" font-weight="400" font-style="italic">sen</text>
<text x="1684" y="265.8" font-size="10.5" fill="#4e4058" text-anchor="middle" font-weight="400" font-style="italic">lubuskie</text>
<text x="423" y="302.4" font-size="10.5" fill="#262626" text-anchor="start" font-weight="400" >Colchester</text>
<text x="346" y="320.8" font-size="10.5" fill="#262626" text-anchor="start" font-weight="400" >an</text>
<text x="346" y="352.3" font-size="12" fill="#262626" text-anchor="start" font-weight="400" >ondon</text>
<text x="407.2" y="339.5" font-size="10.5" fill="#262626" text-anchor="start" font-weight="400" >Southend-</text>
<text x="414.5" y="351.0" font-size="10.5" fill="#262626" text-anchor="start" font-weight="400" >on-Sea</text>
<text x="436.8" y="401.5" font-size="10.5" fill="#262626" text-anchor="start" font-weight="400" >Canterbury</text>
<text x="346" y="449.2" font-size="10.5" fill="#262626" text-anchor="start" font-weight="400" >righton</text>
<text x="359" y="627.8" font-size="10.5" fill="#262626" text-anchor="start" font-weight="400" >Le Havre</text>
<text x="449.3" y="634.5" font-size="10.5" fill="#262626" text-anchor="start" font-weight="400" >Rouen</text>
<text x="1536" y="416.8" font-size="12" fill="#262626" text-anchor="start" font-weight="400" >resden</text>
<text x="346" y="682.3" font-size="11" fill="#4e4058" text-anchor="start" font-weight="400" font-style="italic">Normandie</text></svg>
</div>
<div class="b" style="left:346px;top:943px;width:1623px;height:1.5px;background:#6a6a6a;"></div>
<!-- zoom control -->
<div class="b" style="left:356px;top:272px;width:29.30000000000001px;height:57px;background:#7c7c7c;border:1px solid #6a6a6a;border-radius:2px;"></div>
<div class="b" style="left:357px;top:300px;width:27.30000000000001px;height:1px;background:#6d6d6d;"></div>
<svg style="left:362px;top:278px" width="18" height="44" viewBox="0 0 18 44"><rect x="2.5" y="7.3" width="13" height="2.4" fill="#111"/><rect x="7.8" y="2" width="2.4" height="13" fill="#111"/><rect x="2.5" y="35.8" width="13" height="2.4" fill="#111"/></svg>
<!-- map marker -->
<svg style="left:1352px;top:779px" width="28" height="38" viewBox="0 0 28 38"><path d="M14,1 C7,1 2.5,6 2.5,12 C2.5,19 14,36 14,36 C14,36 25.5,19 25.5,12 C25.5,6 21,1 14,1 Z" fill="#1b4c7e"/><circle cx="14" cy="11.2" r="4.3" fill="#7c7c7c"/></svg>
<!-- kebab menu popup -->
<div class="b" style="left:1898.2px;top:263.8px;width:70.7px;height:63.8px;background:#7f7f7f;box-shadow:-1px 1px 3px rgba(0,0,0,.25);"></div>
<div class="t" id="edit" style="left:1929.00px;top:278.47px;font-size:11.5px;color:#1f1f1f;transform:scaleX(1.1100);transform-origin:0 0;">Edit</div>
<div class="t" id="delete" style="left:1917.80px;top:302.57px;font-size:11.5px;color:#1f1f1f;transform:scaleX(0.9980);transform-origin:0 0;">Delete</div>
<!-- modal -->
<div class="b" style="left:459px;top:184.5px;width:1077px;height:595.5px;background:#fff;"></div>
<div class="b" style="left:459px;top:237.5px;width:1077px;height:1.5px;background:#e0e0e0;"></div>
<div class="b" style="left:459px;top:711px;width:1077px;height:1.5px;background:#e0e0e0;"></div>
<div class="b" style="left:1485.3px;top:194.1px;width:34.4px;height:34.4px;border-radius:50%;background:#ebebeb;"></div>
<svg style="left:1495.5px;top:204.3px" width="14" height="14" viewBox="0 0 14 14"><path d="M2,2 L12,12 M12,2 L2,12" stroke="#222" stroke-width="1.6"/></svg>
<div class="b" style="left:474.3px;top:323.3px;width:463.40000000000003px;height:37.39999999999998px;border:1px solid #e6e6e6;"></div>
<div class="b" style="left:474.3px;top:417.5px;width:463.40000000000003px;height:37.5px;border:1px solid #e6e6e6;"></div>
<svg style="left:952.6px;top:328.1px" width="25.2" height="25.2" viewBox="0 0 24 24"><path fill="#555" d="M20 5h-9.12L10 2H4c-1.1 0-2 .9-2 2v13c0 1.1.9 2 2 2h7l1 3h8c1.1 0 2-.9 2-2V7c0-1.1-.9-2-2-2zM7.17 14.59c-2.25 0-4.09-1.83-4.09-4.09s1.83-4.09 4.09-4.09c1.04 0 1.99.37 2.740 1.07l.07.06-1.23 1.180-.06-.05c-.29-.27-.78-.59-1.52-.59-1.31 0-2.38 1.09-2.38 2.42s1.07 2.42 2.38 2.42c1.37 0 1.96-.87 2.12-1.46H7.08V9.91h3.95l.01.07c.04.21.05.4.05.61 0 2.35-1.61 4-3.92 4zm6.03-1.71c.33.6.74 1.18 1.19 1.7l-.54.53-.65-2.23zm.77-.76h-.99l-.31-1.04h3.99s-.34 1.31-1.56 2.74c-.52-.62-.89-1.23-1.13-1.7zM21 20c0 .55-.45 1-1 1h-7l2-2-.81-2.77.92-.92L17.79 18l.73-.73-2.71-2.68c.9-1.03 1.6-2.25 1.920-3.51H19v-1.04h-3.64V9h-1.04v1.04h-1.96L11.18 6H20c.55 0 1 .45 1 1v13z"/></svg>
<svg style="left:952.6px;top:422.3px" width="25.2" height="25.2" viewBox="0 0 24 24"><path fill="#555" d="M20 5h-9.12L10 2H4c-1.1 0-2 .9-2 2v13c0 1.1.9 2 2 2h7l1 3h8c1.1 0 2-.9 2-2V7c0-1.1-.9-2-2-2zM7.17 14.59c-2.25 0-4.09-1.830-4.09-4.09s1.83-4.09 4.09-4.09c1.04 0 1.99.37 2.74 1.07l.07.06-1.23 1.18-.06-.05c-.29-.27-.78-.59-1.52-.59-1.31 0-2.38 1.09-2.38 2.42s1.07 2.42 2.38 2.42c1.37 0 1.96-.87 2.12-1.46H7.08V9.91h3.95l.01.07c.04.21.05.4.05.61 0 2.35-1.61 4-3.92 4zm6.03-1.71c.33.6.74 1.18 1.19 1.7l-.54.53-.65-2.23zm.77-.76h-.99l-.31-1.04h3.99s-.34 1.31-1.56 2.74c-.52-.62-.89-1.23-1.13-1.7zM21 20c0 .55-.45 1-1 1h-7l2-2-.81-2.77.92-.92L17.79 18l.73-.73-2.71-2.68c.9-1.03 1.6-2.25 1.92-3.51H19v-1.04h-3.64V9h-1.04v1.04h-1.96L11.18 6H20c.55 0 1 .45 1 1v13z"/></svg>
<div class="b" style="left:474.3px;top:512.4px;width:229.2px;height:48.89999999999998px;border:1px solid #e6e6e6;"></div>
<div class="b" style="left:703px;top:512.4px;width:52.60000000000002px;height:41.30000000000007px;background:#eeeeee;"></div>
<div class="b" style="left:755.1px;top:512.4px;width:228.69999999999993px;height:48.89999999999998px;border:1px solid #e6e6e6;"></div>
<svg style="left:666px;top:532px" width="12" height="9" viewBox="0 0 12 9"><polyline points="1,1.8 6,6.8 11,1.8" fill="none" stroke="#333" stroke-width="1.5"/></svg>
<svg style="left:947px;top:532px" width="12" height="9" viewBox="0 0 12 9"><polyline points="1,1.8 6,6.8 11,1.8" fill="none" stroke="#333" stroke-width="1.5"/></svg>
<div class="b" style="left:474.3px;top:612.3px;width:22.69999999999999px;height:21.300000000000068px;border:1px solid #e3e3e3;border-radius:2px;"></div>
<div class="b" style="left:474.3px;top:654.4px;width:23.0px;height:21.300000000000068px;background:#555;border-radius:2px;"></div>
<svg style="left:474.3px;top:654.4px" width="23" height="21.3" viewBox="0 0 23 21.3"><polyline points="5.5,11 10.5,15.6 17.6,6.5" fill="none" stroke="#fff" stroke-width="1.3"/></svg>
<div class="b" style="left:1012.8px;top:304.1px;width:23.0px;height:22.799999999999955px;background:#555;border-radius:2px;"></div>
<svg style="left:1012.8px;top:304.1px" width="23" height="22.8" viewBox="0 0 23 22.8"><polyline points="5.8,12.4 11.7,16.3 18.9,7.2" fill="none" stroke="#fff" stroke-width="1.3"/></svg>
<div class="b" style="left:1362px;top:727.7px;width:75px;height:37.69999999999993px;border:2px solid #333;border-radius:2px;"></div>
<div class="b" style="left:1449px;top:728px;width:72.29999999999995px;height:37px;background:#555;"></div>
<div class="b" style="left:1253px;top:275.9px;width:64px;height:64px;border-radius:50%;background:#cd0046;"></div>
<div class="t" id="mtitle" style="left:475.00px;top:203.80px;font-size:15px;color:#333;transform:scaleX(1.0820);transform-origin:0 0;-webkit-text-stroke:0.3px #333;">Edit Asset map tile</div>
<div class="t" id="hgen" style="left:475.00px;top:257.30px;font-size:15px;color:#1192d6;font-weight:700;transform:scaleX(1.0020);transform-origin:0 0;">General</div>
<div class="t" id="hto" style="left:1013.00px;top:257.30px;font-size:15px;color:#1192d6;font-weight:700;transform:scaleX(1.0010);transform-origin:0 0;">Tile options</div>
<div class="t" id="hdo" style="left:474.60px;top:588.30px;font-size:15px;color:#1192d6;font-weight:700;transform:scaleX(0.9940);transform-origin:0 0;">Display options</div>
<div class="t" id="lname" style="left:490.25px;top:296.27px;font-size:11.5px;color:#333;font-weight:700;transform:scaleX(1.0290);transform-origin:0 0;">Name *</div>
<div class="t" id="ldesc" style="left:490.25px;top:390.87px;font-size:11.5px;color:#333;font-weight:700;transform:scaleX(0.9600);transform-origin:0 0;">Description</div>
<div class="t" id="lsize" style="left:489.70px;top:485.87px;font-size:11.5px;color:#333;font-weight:700;transform:scaleX(0.9820);transform-origin:0 0;">Tile size *</div>
<div class="t" id="vmap" style="left:498.90px;top:335.74px;font-size:12px;color:#555;transform:scaleX(0.9470);transform-origin:0 0;">map</div>
<div class="t" id="vcol" style="left:490.50px;top:530.97px;font-size:11.5px;color:#444;transform:scaleX(0.9610);transform-origin:0 0;">10 columns</div>
<div class="t" id="vrow" style="left:771.00px;top:530.97px;font-size:11.5px;color:#444;transform:scaleX(0.9430);transform-origin:0 0;">10 rows</div>
<div class="t" id="vx" style="left:726.00px;top:528.69px;font-size:11px;color:#555;">x</div>
<div class="t" id="cb1" style="left:507.30px;top:617.47px;font-size:11.5px;color:#555;transform:scaleX(1.0160);transform-origin:0 0;">Show the provided title as titlebar</div>
<div class="t" id="cb2" style="left:507.30px;top:659.57px;font-size:11.5px;color:#555;transform:scaleX(1.0040);transform-origin:0 0;">Only display this tile in full size (no other tiles shown)</div>
<div class="t" id="cb3" style="left:1046.00px;top:309.97px;font-size:11.5px;color:#555;transform:scaleX(0.9940);transform-origin:0 0;">Display the locations of the child assets</div>
<div class="t" id="p1" style="left:1013.25px;top:357.27px;font-size:11.5px;color:#555;transform:scaleX(1.0000);transform-origin:0 0;">Choose whether to display location markers on the map for the children of the asset or for the</div>
<div class="t" id="p2" style="left:1013.25px;top:374.02px;font-size:11.5px;color:#555;transform:scaleX(0.9980);transform-origin:0 0;">current location of the asset.</div>
<div class="t" id="p3" style="left:1013.25px;top:407.77px;font-size:11.5px;color:#555;transform:scaleX(0.9910);transform-origin:0 0;">To ensure the display of markers, an asset must possess properties (with 'lat' and 'lon' keys)</div>
<div class="t" id="p4" style="left:1013.25px;top:424.52px;font-size:11.5px;color:#555;transform:scaleX(1.0100);transform-origin:0 0;">containing the corresponding latitude and longitude values.</div>
<div class="t" id="p5" style="left:1013.25px;top:459.52px;font-size:11.5px;color:#555;transform:scaleX(0.9940);transform-origin:0 0;">Create the appropriate properties on the asset's designated asset type.</div>
<div class="t" id="bclose" style="left:1385.00px;top:741.27px;font-size:11.5px;color:#222;transform:scaleX(0.9860);transform-origin:0 0;">Close</div>
<div class="t" id="bsave" style="left:1473.00px;top:741.27px;font-size:11.5px;color:#fff;transform:scaleX(0.9150);transform-origin:0 0;">Save</div>
<div class="t" id="badge1" style="left:1276.80px;top:289.73px;font-size:36px;color:#fff;transform:scaleX(0.68);transform-origin:0 0;">1</div>
</body></html>
